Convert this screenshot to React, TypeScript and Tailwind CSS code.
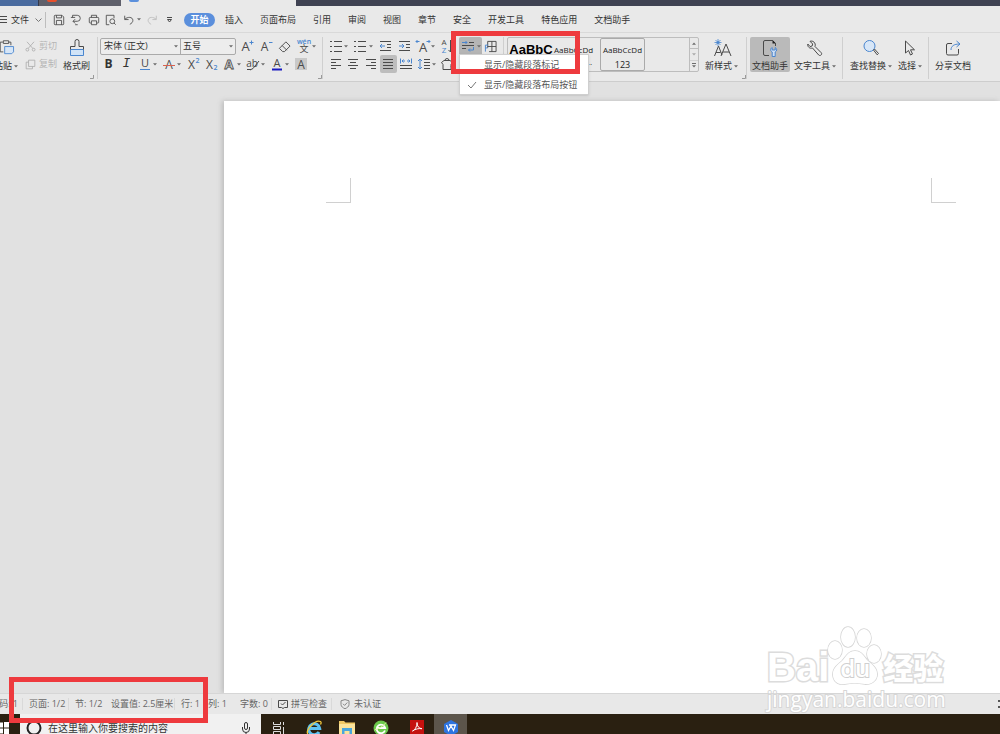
import type { ReactNode } from "react"
import clsx from "clsx"

const BLUE = "#4a86cf"
const INK = "#4a4a4a"

const menuTabs = ["插入", "页面布局", "引用", "审阅", "视图", "章节", "安全", "开发工具", "特色应用", "文档助手"]

interface IconProps {
  children: ReactNode;
  className?: string;
  box?: string;
}

function Icon({ children, className = "size-[14px]", box = "0 0 14 14" }: IconProps) {
  return (
    <svg viewBox={box} className={clsx("shrink-0 overflow-visible", className)} fill="none" stroke={INK} strokeWidth="1" aria-hidden="true">
      {children}
    </svg>
  )
}

function Caret() {
  return (
    <svg viewBox="0 0 4 3" className="h-[3px] w-1 shrink-0" aria-hidden="true">
      <path d="M0 0.3h4L2 2.6z" fill="#6b6b6b" />
    </svg>
  )
}

interface ToolProps {
  label: string;
  children: ReactNode;
  caret?: boolean;
  active?: boolean;
}

function Tool({ label, children, caret, active }: ToolProps) {
  return (
    <button
      aria-label={label}
      className={clsx("flex h-[18px] shrink-0 items-center rounded-xs", caret ? "w-[23px]" : "w-[17px]", active && "bg-[#bdbdbd]")}
    >
      <span className="flex w-[17px] shrink-0 justify-center">{children}</span>
      {caret && <Caret />}
    </button>
  )
}

interface BigToolProps {
  label: string;
  children: ReactNode;
  caret?: boolean;
  className?: string;
}

function BigTool({ label, children, caret, className }: BigToolProps) {
  return (
    <button className={clsx("flex h-[35px] shrink-0 flex-col items-center justify-between rounded-xs pt-[2px]", className)}>
      {children}
      <span className="flex items-center gap-0.5 leading-3 whitespace-nowrap">
        {label}
        {caret && <Caret />}
      </span>
    </button>
  )
}

function Corner() {
  return (
    <svg viewBox="0 0 4 4" className="size-1 self-end" fill="none" stroke="#999" aria-hidden="true">
      <path d="M3.5 0v3.5H0" />
    </svg>
  )
}

/* horizontal strokes shared by list and alignment icons: [x1, x2, y] */
function Lines({ rows, stroke = INK }: { rows: number[][]; stroke?: string }) {
  return (
    <>
      {rows.map(([x1, x2, y]) => (
        <path key={`${x1}-${y}`} d={`M${x1} ${y}H${x2}`} stroke={stroke} />
      ))}
    </>
  )
}

function Letter({ children, x = 7, y = 11.5, size = 13, fill = INK, weight = 400 }: {
  children: string; x?: number; y?: number; size?: number; fill?: string; weight?: number;
}) {
  return (
    <text x={x} y={y} fontSize={size} fill={fill} stroke="none" fontWeight={weight} textAnchor="middle">
      {children}
    </text>
  )
}

function TitleStrip() {
  return (
    <div className="flex h-1.5 shrink-0 overflow-hidden bg-[#3f4252]">
      <div className="w-[39px] border-r border-[#34394a] bg-[#4a6b9f]" />
      <div className="w-[82px] bg-[#5f606b] pl-2">
        <div className="h-[2px] w-2.5 rounded-b-full bg-[#e8502c]" />
      </div>
      <div className="w-[175px] bg-[#e9e9e9] pl-2">
        <div className="h-[2px] w-2.5 rounded-b-xs bg-[#5b90dc]" />
      </div>
    </div>
  )
}

function MenuBar() {
  return (
    <div className="flex h-[27px] shrink-0 items-center border-b border-[#d9d9d9] bg-[#e9e9e9] pt-px whitespace-nowrap">
      <button className="flex h-4 w-[46px] items-center gap-1 border-r border-[#bdbdbd]">
        <Icon className="h-[7px] w-[7px]" box="0 0 7 7">
          <Lines rows={[[0, 7, 0.5], [0, 7, 3.5], [0, 7, 6.5]]} />
        </Icon>
        <span>文件</span>
        <Icon className="ml-0.5 h-1 w-[7px]" box="0 0 7 4">
          <path d="M.5.5l3 3 3-3" stroke="#777" />
        </Icon>
      </button>
      <div className="ml-1 flex w-32 justify-between">
        <Tool label="保存">
          <Icon className="size-3">
            <path d="M2.500 1.500h8l2 2v8a1 1 0 0 1-1 1h-9a1 1 0 0 1-1-1v-9a1 1 0 0 1 1-1z M4 1.500v3h6v-3 M4 12.500v-5h6v5" />
          </Icon>
        </Tool>
        <Tool label="输出">
          <Icon className="size-3">
            <path d="M3 4V1.500h5.500a3.500 3.500 0 0 1 0 7H3.500M6 6L3.500 8.500 6 11M1 4h5M6 12.500h3" />
          </Icon>
        </Tool>
        <Tool label="打印">
          <Icon className="size-3">
            <path d="M4 4V1.500h6V4M3.500 10.500H2.500a1 1 0 0 1-1-1V5a1 1 0 0 1 1-1h9a1 1 0 0 1 1 1v4.500a1 1 0 0 1-1 1h-1M4 8h6v4.500H4z" />
          </Icon>
        </Tool>
        <Tool label="打印预览">
          <Icon className="size-3">
            <path d="M5 12.500H1.500v-11h9V5M12.500 12.500l-2-2" />
            <circle cx="8.500" cy="8.500" r="2.800" />
          </Icon>
        </Tool>
        <Tool label="撤销" caret>
          <Icon className="size-3">
            <path d="M2 2v4.500h4.500M2.200 6.200C5 3 11.500 3 11.500 7.500c0 2-1.500 3.500-3.500 4.500" />
          </Icon>
        </Tool>
        <Tool label="恢复">
          <Icon className="size-3">
            <path d="M12 2v4.500H7.500M11.800 6.200C9 3 2.500 3 2.500 7.500c0 2 1.500 3.500 3.500 4.500" stroke="#bbb" />
          </Icon>
        </Tool>
        <Tool label="自定义快速访问工具栏">
          <Icon className="h-[6px] w-[5px]" box="0 0 5 6">
            <path d="M0 .5h5M.5 2.500h4l-2 2.500z" />
          </Icon>
        </Tool>
      </div>
      <nav className="ml-1.5 flex items-center">
        <button className="mr-2.5 h-[14px] w-[31px] rounded-full bg-[#5b8fdc] leading-3 font-bold text-white">开始</button>
        <div className="flex gap-[17px]">
          {menuTabs.map((tab) => (
            <button key={tab}>{tab}</button>
          ))}
        </div>
      </nav>
    </div>
  )
}

function ClipboardGroup() {
  return (
    <div className="flex w-[98px] shrink-0 border-r border-[#cfcfcf]">
      <div className="flex w-[19px] justify-end overflow-hidden">
        <BigTool label="粘贴" caret className="pr-px">
          <Icon className="h-4 w-4" box="0 0 18 16">
            <path d="M6 13.500H2.500v-11h3M12 2.500h2.500V6M6 1h6v3H6z" />
            <path d="M7.500 7.500h10v6l-2 2h-8z" fill="#d7e6f7" stroke={BLUE} />
          </Icon>
        </BigTool>
      </div>
      <div className="ml-1.5 flex flex-col text-[#b5b5b5]">
        <button className="flex h-[18px] items-center gap-[3px]">
          <Icon className="size-[11px]">
            <path d="M2.500 1l7.500 8.500M11.500 1L4 9.500" stroke="#aaa" />
            <circle cx="3" cy="11" r="1.800" stroke="#aaa" />
            <circle cx="11" cy="11" r="1.800" stroke="#aaa" />
          </Icon>
          剪切
        </button>
        <button className="flex h-[18px] items-center gap-[3px]">
          <Icon className="size-[11px]">
            <path d="M4.500 1.500h8v8h-8zM4.500 4h-3v8.500h8v-3" stroke="#aaa" />
          </Icon>
          复制
        </button>
      </div>
      <BigTool label="格式刷" className="ml-1.5">
        <Icon className="h-[18px] w-4" box="0 0 16 18">
          <path d="M1.500 10.500h13v6h-13z" fill="#d0e3f7" stroke={BLUE} />
          <path d="M1.500 10.500V7.500h4.500v-5a2 2 0 0 1 4 0v5h4.500v3" />
        </Icon>
      </BigTool>
      <Corner />
    </div>
  )
}

function FontGroup() {
  return (
    <div className="flex w-[225px] shrink-0 justify-between border-r border-[#cfcfcf] pl-0.5">
      <div className="flex flex-col">
        <div className="flex h-[18px] items-center">
          <div className="flex h-[17px] w-[136px] rounded-xs border border-[#aaa] bg-[#ededed]">
            <div className="relative flex w-20 items-center border-r border-[#aaa]">
              <select aria-label="字体" className="w-full appearance-none pl-[3px] outline-none">
                <option>宋体 (正文)</option>
              </select>
              <span className="pointer-events-none absolute right-0.5"><Caret /></span>
            </div>
            <div className="relative flex flex-1 items-center">
              <select aria-label="字号" className="w-full appearance-none pl-0.5 outline-none">
                <option>五号</option>
              </select>
              <span className="pointer-events-none absolute right-0.5"><Caret /></span>
            </div>
          </div>
          <div className="ml-0.5 flex w-20 justify-between">
            <Tool label="增大字号">
              <Icon>
                <Letter x={5.5} y={12}>A</Letter>
                <path d="M9.500 3.500h4M11.500 1.500v4" stroke={BLUE} />
              </Icon>
            </Tool>
            <Tool label="减小字号">
              <Icon>
                <Letter x={5.5} y={12} size={12}>A</Letter>
                <path d="M10 3.500h3.500" stroke={BLUE} />
              </Icon>
            </Tool>
            <Tool label="清除格式">
              <Icon className="size-[13px]">
                <path d="M8.500 2l4.500 4.500-6 6H5L1.500 9z M4.500 6l5 5" />
              </Icon>
            </Tool>
            <Tool label="拼音指南" caret>
              <Icon>
                <Letter y={4.500} size={7} fill={BLUE} weight={600}>wén</Letter>
                <Letter y={13} size={9}>文</Letter>
              </Icon>
            </Tool>
          </div>
        </div>
        <div className="flex w-[209px] justify-between">
          <Tool label="加粗"><span className="text-[12px] leading-3 font-bold">B</span></Tool>
          <Tool label="倾斜"><span className="font-['Liberation_Mono',monospace] text-[13px] leading-3 italic">I</span></Tool>
          <Tool label="下划线" caret>
            <Icon>
              <Letter y={10} size={11}>U</Letter>
              <path d="M2 12.500h10" stroke={BLUE} />
            </Icon>
          </Tool>
          <Tool label="删除线" caret>
            <Icon>
              <Letter size={12}>A</Letter>
              <path d="M1 8.500h12" stroke="#d9614f" />
            </Icon>
          </Tool>
          <Tool label="上标">
            <Icon>
              <Letter x={5.5} size={12}>X</Letter>
              <Letter x={11.5} y={6} size={7} fill={BLUE} weight={600}>2</Letter>
            </Icon>
          </Tool>
          <Tool label="下标">
            <Icon>
              <Letter x={5.5} size={12}>X</Letter>
              <Letter x={11.5} y={13} size={7} fill={BLUE} weight={600}>2</Letter>
            </Icon>
          </Tool>
          <Tool label="文字效果" caret>
            <Icon>
              <text x="7" y="12" fontSize="13" fontWeight="700" textAnchor="middle" fill="#e9e9e9" stroke={INK} strokeWidth=".8">A</text>
            </Icon>
          </Tool>
          <Tool label="突出显示" caret>
            <Icon>
              <Letter x={6} y={10} size={10}>ab</Letter>
              <path d="M13 4L7 11.500l-3 1.500M1 12.500h4" />
            </Icon>
          </Tool>
          <Tool label="字体颜色" caret>
            <Icon>
              <Letter y={10} size={11}>A</Letter>
              <path d="M2 12.500h10" stroke="#1a1ac0" strokeWidth="2" />
            </Icon>
          </Tool>
          <Tool label="字符底纹">
            <Icon>
              <path d="M1 1h12v12H1z" fill="#c9c9c9" stroke="none" />
              <Letter size={12}>A</Letter>
            </Icon>
          </Tool>
        </div>
      </div>
      <Corner />
    </div>
  )
}

function ParagraphMenu() {
  return (
    <div role="menu" className="absolute top-[17px] left-0 z-20 w-[130px] border border-[#cfcfcf] bg-white text-[#555] shadow-sm">
      <button role="menuitem" className="flex h-5 w-full items-center pl-6 whitespace-nowrap">显示/隐藏段落标记</button>
      <button role="menuitem" className="flex h-[19px] w-full items-center whitespace-nowrap">
        <span className="flex w-6 justify-center">
          <Icon className="h-2 w-2.5" box="0 0 10 8">
            <path d="M1 4l3 3 5-6" stroke="#777" />
          </Icon>
        </span>
        显示/隐藏段落布局按钮
      </button>
    </div>
  )
}

function ParagraphGroup() {
  return (
    <div className="flex w-[181px] shrink-0 border-r border-[#cfcfcf] pl-1">
      <div className="flex w-[129px] flex-col">
        <div className="flex justify-between">
          <Tool label="项目符号" caret>
            <Icon>
              <Lines rows={[[5, 13, 2.5], [5, 13, 7.5], [5, 13, 12.5]]} />
              <Lines rows={[[1, 3, 2.5], [1, 3, 7.5], [1, 3, 12.5]]} />
            </Icon>
          </Tool>
          <Tool label="编号" caret>
            <Icon>
              <Lines rows={[[5, 13, 2.5], [5, 13, 7.5], [5, 13, 12.5]]} />
              <Lines rows={[[1, 3, 2.5], [1, 3, 7.5], [1, 3, 12.5]]} />
            </Icon>
          </Tool>
          <Tool label="减少缩进量">
            <Icon>
              <Lines rows={[[2, 13, 2.5], [9, 13, 5.5], [9, 13, 8.5], [2, 13, 11.5]]} />
              <path d="M2 7h5M4 5L2 7l2 2" stroke={BLUE} />
            </Icon>
          </Tool>
          <Tool label="增加缩进量">
            <Icon>
              <Lines rows={[[2, 13, 2.5], [9, 13, 5.5], [9, 13, 8.5], [2, 13, 11.5]]} />
              <path d="M2 7h5M5 5l2 2-2 2" stroke={BLUE} />
            </Icon>
          </Tool>
          <Tool label="中文版式" caret>
            <Icon>
              <Letter y={13} size={13}>A</Letter>
              <path d="M0 2.500h3.500M1.500 1L0 2.500 1.500 4M10.500 2.500H14M12.500 1L14 2.500 12.500 4" stroke={BLUE} />
            </Icon>
          </Tool>
          <Tool label="排序">
            <Icon>
              <Letter x={4} y={6} size={8}>A</Letter>
              <Letter x={4} y={14} size={8} fill={BLUE}>Z</Letter>
              <path d="M10.500 1v12M8.500 11l2 2 2-2" />
            </Icon>
          </Tool>
        </div>
        <div className="flex justify-between">
          <Tool label="左对齐">
            <Icon><Lines rows={[[2, 12, 2.5], [2, 7, 5.5], [2, 12, 8.5], [2, 7, 11.5]]} /></Icon>
          </Tool>
          <Tool label="居中对齐">
            <Icon><Lines rows={[[2, 12, 2.5], [4, 10, 5.5], [2, 12, 8.5], [4, 10, 11.5]]} /></Icon>
          </Tool>
          <Tool label="右对齐">
            <Icon><Lines rows={[[2, 12, 2.5], [7, 12, 5.5], [2, 12, 8.5], [7, 12, 11.5]]} /></Icon>
          </Tool>
          <Tool label="两端对齐" active>
            <Icon><Lines rows={[[2, 12, 2.5], [2, 12, 5.5], [2, 12, 8.5], [2, 12, 11.5]]} /></Icon>
          </Tool>
          <Tool label="分散对齐">
            <Icon>
              <Lines rows={[[1, 13, 8.5], [1, 13, 11.5]]} />
              <path d="M1.500 1.500v5M12.500 1.500v5M3 4h3M8 4h3M4.500 2.500L3 4l1.500 1.500M9.500 2.500L11 4 9.500 5.500" stroke={BLUE} />
            </Icon>
          </Tool>
          <Tool label="行距" caret>
            <Icon>
              <Lines rows={[[7, 13, 2.5], [7, 13, 5.5], [7, 13, 8.5], [7, 13, 11.5]]} />
              <path d="M3 2v10M1 4l2-2 2 2M1 10l2 2 2-2" stroke={BLUE} />
            </Icon>
          </Tool>
          <Tool label="底纹颜色">
            <Icon>
              <path d="M1.500 5.500L4 3.500h6l2.500 2-1.500 2v5H3v-5zM5 3.500a2 2 0 0 1 4 0M11 9.500l2 2" />
            </Icon>
          </Tool>
        </div>
      </div>
      <div className="relative ml-[3px] h-[18px]">
        <button aria-label="显示/隐藏编辑标记" aria-expanded="true" className="flex h-[18px] w-[23px] items-center justify-center gap-0.5 rounded-t-xs bg-[#b5b5b5]">
          <Icon>
            <Lines rows={[[8, 13, 3.5], [1, 13, 6.5], [1, 5, 9.5]]} />
            <path d="M1 3.500h5M4.500 2L6 3.500 4.500 5M12.500 8v3H7.500M9 9.500L7.500 11 9 12.500" stroke={BLUE} />
          </Icon>
          <Caret />
        </button>
        <ParagraphMenu />
        <div className="pointer-events-none absolute -top-1.5 -left-2 z-30 h-[43px] w-[129px] border-5 border-[#ee3a3e]" />
      </div>
      <Tool label="制表位">
        <Icon className="size-[13px]">
          <path d="M4 8.500v-7h9v11H5.500M8.500 1.500v11M4 7h9" />
          <path d="M4.500 5.500h-3v7M1.500 8.500h2.500" stroke={BLUE} />
        </Icon>
      </Tool>
    </div>
  )
}

function StyleGallery() {
  return (
    <div className="ml-[3px] flex h-[35px] w-48 shrink-0 justify-between rounded-xs border border-[#bdbdbd] text-[#222]">
      <div className="flex">
        <button className="flex w-[46px] items-start justify-center pt-1 font-['Liberation_Sans',Arial,sans-serif] text-[13px] leading-4 font-bold text-black">AaBbC</button>
        <button className="flex w-[46px] flex-col items-start pt-1.5 text-[8px] leading-3">
          AaBbCcDd
          <span className="self-end pr-2">...</span>
        </button>
        <button className="flex h-[33px] w-[45px] flex-col items-center gap-[3px] rounded-xs border border-[#aaa] pt-[5px] text-[8px] leading-3">
          AaBbCcDd
          <span className="text-[9px] leading-3">123</span>
        </button>
      </div>
      <div className="flex w-[9px] flex-col divide-y divide-[#bdbdbd] border-l border-[#bdbdbd]">
        <button aria-label="上一行" className="flex flex-1 items-center justify-center">
          <span className="rotate-180"><Caret /></span>
        </button>
        <button aria-label="下一行" className="flex flex-1 items-center justify-center opacity-50"><Caret /></button>
        <button aria-label="更多样式" className="flex flex-1 flex-col items-center justify-center gap-px">
          <span className="h-px w-1 bg-[#6b6b6b]" />
          <Caret />
        </button>
      </div>
    </div>
  )
}

function Ribbon() {
  return (
    <div className="flex h-[49px] shrink-0 border-b border-[#cdcdcd] bg-[#e9e9e9] pt-1 pb-0.5">
      <ClipboardGroup />
      <FontGroup />
      <ParagraphGroup />
      <StyleGallery />
      <div className="flex w-12 shrink-0 justify-between border-r border-[#cfcfcf] pl-1.5">
        <BigTool label="新样式" caret>
          <Icon className="h-[18px] w-[18px]" box="0 0 18 18">
            <path d="M1.500 17L5.500 7l3.500 9M3 13.500h4.500M8 17l5-12 5 12M10 13h6" />
            <circle cx="5" cy="3.500" r="1" stroke={BLUE} />
            <path d="M5 0v7M1.500 3.500h7M2.500 1l5 5M7.500 1l-5 5" stroke={BLUE} strokeWidth=".8" />
          </Icon>
        </BigTool>
        <Corner />
      </div>
      <div className="flex w-24 shrink-0 gap-1 border-r border-[#cfcfcf] pl-[3px]">
        <BigTool label="文档助手" className="w-10 bg-[#bababa]">
          <Icon className="h-[18px] w-4" box="0 0 16 18">
            <path d="M7 16.500H3a1.500 1.500 0 0 1-1.500-1.500V3A1.500 1.500 0 0 1 3 1.500h7.500l3 3V7" />
            <path d="M10.500 1l3.500 3.500H10.500z" fill="#222" stroke="none" />
            <path d="M10.200 8.500c-2 1-2 3.500 0 4.500v4.500h3V13c2-1 2-3.500 0-4.500V11h-3z" fill="#cfe0f5" stroke={BLUE} />
          </Icon>
        </BigTool>
        <BigTool label="文字工具" caret>
          <Icon className="h-[18px] w-4" box="0 0 16 18">
            <path d="M3 2.300l2.700 2.700-.6 2-2 .6L.8 5c-.5 2.500 1.700 5 4.700 4l6.200 7c1.500 1.500 4-.7 2.500-2.300L8 7.500C9.200 4 6 1.200 3 2.300z" />
          </Icon>
        </BigTool>
      </div>
      <div className="flex w-[86px] shrink-0 gap-1.5 border-r border-[#cfcfcf] pl-[7px]">
        <BigTool label="查找替换" caret>
          <Icon className="h-[18px] w-4" box="0 0 16 18">
            <circle cx="6.500" cy="7" r="5.500" fill="#d7e6f7" stroke={BLUE} />
            <path d="M10.500 11l1-1 4 4.500-1.300 1.300z" />
          </Icon>
        </BigTool>
        <BigTool label="选择" caret>
          <Icon className="h-[18px] w-3" box="0 0 12 18">
            <path d="M1.500 2v12l3-2.500 2 4.500 2-1-2-4.200h4z" />
          </Icon>
        </BigTool>
      </div>
      <BigTool label="分享文档" className="ml-1.5">
        <Icon className="h-[18px] w-4" box="0 0 16 18">
          <path d="M7 4.500H3A1.500 1.500 0 0 0 1.500 6v8.500A1.500 1.500 0 0 0 3 16h9a1.500 1.500 0 0 0 1.500-1.500V10" />
          <path d="M6 11c0-4 3-6 8.500-6M11.500 2l3.500 3-3.500 3" stroke={BLUE} />
        </Icon>
      </BigTool>
    </div>
  )
}

function Workspace() {
  return (
    <main className="flex min-h-0 flex-1 flex-col bg-[#e1e1e1] pt-[19px] pl-56">
      <div className="flex flex-1 items-start justify-between bg-white pt-[77px] pr-11 pl-[102px] shadow-[-2px_0_5px_#bbb]">
        <div className="size-[25px] border-r border-b border-[#d0d0d0]" />
        <div className="size-[25px] border-b border-l border-[#d0d0d0]" />
      </div>
    </main>
  )
}

function Watermark() {
  return (
    <div className="pointer-events-none absolute right-[50px] bottom-5 flex w-[183px] flex-col text-white select-none">
      <div className="flex items-end [-webkit-text-stroke:3px_#dcdcdc] [paint-order:stroke]">
        <span className="font-['Liberation_Sans',Arial,sans-serif] text-[40px] leading-[34px] font-bold">Bai</span>
        <div className="relative flex h-[60px] w-[52px] justify-center">
          <svg viewBox="0 0 52 62" className="absolute inset-0 overflow-visible" fill="#fff" stroke="#d4d4d4" strokeWidth="1.500" aria-hidden="true">
            <ellipse cx="6" cy="26" rx="7" ry="9" />
            <ellipse cx="19" cy="13" rx="7" ry="10" />
            <ellipse cx="35" cy="14" rx="7" ry="9" />
            <ellipse cx="45" cy="30" rx="7" ry="9" />
            <path d="M26 27c-7 0-9 6-13 10-5 4-10 8-9 15s7 9 12 8 14-1 20 0 11-3 12-8c1-7-4-11-9-15-4-4-6-10-13-10z" />
          </svg>
          <span className="relative self-end pb-0.5 font-['Open_Sans',sans-serif] text-[24px] leading-7 font-semibold [-webkit-text-stroke:2px_#cfcfcf]">du</span>
        </div>
        <span className="ml-0.5 text-[30px] leading-8 font-black">经验</span>
      </div>
      <span className="font-['Open_Sans',sans-serif] text-[21px] leading-[30px] [-webkit-text-stroke:2px_#d6d6d6] [paint-order:stroke]">jingyan.baidu.com</span>
    </div>
  )
}

function StatusBar() {
  return (
    <footer className="relative flex h-[21px] shrink-0 items-center border-t border-[#d6d6d6] bg-[#e8e8e8] whitespace-nowrap text-[#666]">
      <span className="flex w-[23px] justify-end border-r border-[#d9d9d9] pr-1">码: 1</span>
      <span className="w-[46px] border-r border-[#d9d9d9] pl-1.5">页面: 1/2</span>
      <span className="w-[42px] pl-1.5">节: 1/2</span>
      <span className="w-16 border-r border-[#d9d9d9]">设置值: 2.5厘米</span>
      <span className="w-[33px] pl-1.5">行: 1</span>
      <span className="w-8">列: 1</span>
      <span className="w-8 border-r border-[#d9d9d9]">字数: 0</span>
      <button className="flex w-[60px] items-center gap-0.5 border-r border-[#d9d9d9] pl-[5px]">
        <Icon className="h-[10px] w-3" box="0 0 12 10">
          <path d="M4.500 8.500h-3v-7h9v7h-3M4.500 8.500L6 9.500l1.500-1M4 4.500l1.500 1.500L8.500 3" />
        </Icon>
        拼写检查
      </button>
      <button className="flex items-center gap-1 pl-2">
        <Icon className="size-[10px]" box="0 0 10 10">
          <path d="M5 .6l4 1.200v3.700C9 7.500 7 9 5 9.700 3 9 1 7.500 1 5.500V1.800zM3 4.800l1.600 1.600L7.300 3.500" stroke="#888" />
        </Icon>
        未认证
      </button>
      <span className="ml-auto h-2 w-0.5 border-y-2 border-[#555]" />
      <div className="pointer-events-none absolute -top-[17px] left-[9px] z-30 h-[46px] w-[199px] border-5 border-[#ee3a3e]" />
    </footer>
  )
}

function TaskBar() {
  return (
    <div className="flex h-5 shrink-0 overflow-hidden bg-[#2a2011]">
      <button aria-label="开始菜单" className="flex w-5 pt-2">
        <svg viewBox="0 0 9 12" className="h-3 w-[9px]" fill="#fff" aria-hidden="true">
          <path d="M0 .5h3v5H0zM4 0h5v5.500H4zM0 6.500h3v5H0zM4 6.500h5V12H4z" />
        </svg>
      </button>
      <label className="flex w-[241px] items-start bg-[#f1f1f1] pl-1.5">
        <svg viewBox="0 0 16 16" className="mt-1.5 size-4 shrink-0" fill="none" stroke="#222" strokeWidth="2" aria-hidden="true">
          <circle cx="8" cy="8" r="6.500" />
        </svg>
        <input
          aria-label="搜索"
          placeholder="在这里输入你要搜索的内容"
          className="mt-2 ml-1.5 h-3 w-44 text-[10px] leading-3 outline-none placeholder:text-[#333]"
        />
        <svg viewBox="0 0 8 14" className="mt-2 ml-[18px] h-3.5 w-2 shrink-0" fill="none" stroke="#333" aria-hidden="true">
          <rect x="2.500" y=".5" width="3" height="7" rx="1.500" />
          <path d="M.5 5v2a3.500 3.500 0 0 0 7 0V5M4 10.500V13" />
        </svg>
      </label>
      <button aria-label="任务视图" className="flex w-[35px] justify-center pt-2">
        <svg viewBox="0 0 12 12" className="size-3" fill="none" stroke="#ddd" aria-hidden="true">
          <path d="M.5 0v2.500h7V0M.5 12V9.500h7V12M.5 4.500h7v3h-7zM10.500 0v3M10.500 5v7" />
        </svg>
      </button>
      <button aria-label="Internet Explorer" className="flex w-[35px] justify-center pt-1.5">
        <svg viewBox="0 0 16 16" className="size-4" fill="none" aria-hidden="true">
          <path d="M13 12a5.500 5.500 0 1 1 .7-3.500H4" stroke="#5ec3f2" strokeWidth="3" />
          <path d="M2 14C-1 11 9-1 14.500 1.500c1 .5.500 2 0 3" stroke="#f3c93c" strokeWidth="1.300" />
        </svg>
      </button>
      <button aria-label="文件资源管理器" className="flex w-8 justify-center pt-1.5">
        <svg viewBox="0 0 16 14" className="h-3.5 w-4" aria-hidden="true">
          <path d="M0 1h5l1.500 1.500H16V14H0z" fill="#f0c864" />
          <path d="M0 4h16v10H0z" fill="#fbe39b" />
          <path d="M3 14V8h10v6h-2.500v-3h-5v3z" fill="#4aa6dd" />
        </svg>
      </button>
      <button aria-label="360浏览器" className="flex w-9 justify-center pt-1.5">
        <svg viewBox="0 0 16 16" className="size-4" fill="none" aria-hidden="true">
          <circle cx="8" cy="8" r="7.500" fill="#6cc94c" />
          <path d="M12 10.500A4.300 4.300 0 1 1 12.200 8H4.500" stroke="#fff" strokeWidth="1.800" />
          <path d="M1.500 10C5 9 11 6 13 2.500" stroke="#dff2a0" />
        </svg>
      </button>
      <button aria-label="PDF" className="flex w-[35px] justify-center pt-1.5">
        <svg viewBox="0 0 14 14" className="size-3.5" fill="none" aria-hidden="true">
          <path d="M0 0h14v14H0z" fill="#c5120f" />
          <path d="M2.500 11c2-.5 4.500-4 4.500-8.500 0 4 2 6 5 6.200-3-.5-7 .3-9.500 2.300z" stroke="#fff" />
        </svg>
      </button>
      <button aria-label="WPS" className="flex w-[33px] justify-center bg-[#5c554b] pt-1.5">
        <svg viewBox="0 0 16 16" className="size-4" fill="none" aria-hidden="true">
          <path d="M8 0l7 4v8l-7 4-7-4V4z" fill="#2d74e0" />
          <path d="M3.500 5l2 5.500L8 6l2.500 4.500 2-5.500H6" stroke="#fff" strokeWidth="1.300" />
        </svg>
      </button>
    </div>
  )
}

export default function App() {
  return (
    <div className="relative flex h-screen flex-col overflow-hidden bg-[#e9e9e9] font-['Open_Sans','Noto_Sans_CJK_SC',sans-serif] text-[9px] leading-3 text-[#333]">
      <TitleStrip />
      <MenuBar />
      <Ribbon />
      <Workspace />
      <StatusBar />
      <TaskBar />
      <Watermark />
    </div>
  )
}
